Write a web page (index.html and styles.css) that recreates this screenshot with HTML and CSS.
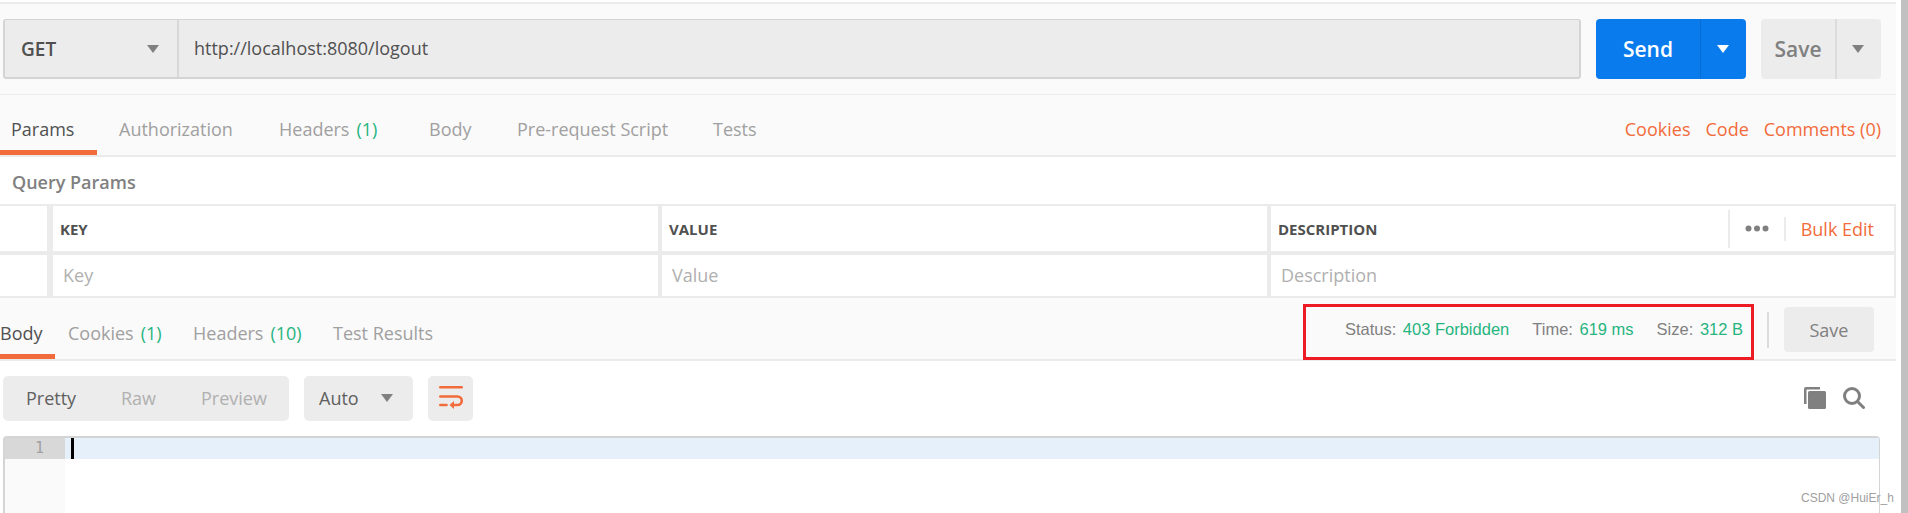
FILE: index.html
```html
<!DOCTYPE html>
<html lang="en">
<head>
<meta charset="utf-8">
<title>Postman request</title>
<link rel="stylesheet" href="styles.css">
</head>
<body>
<div class="page">
  <main class="app">
    <section class="request-bar">
      <div class="url-group">
        <div class="method"><span>GET</span><i class="caret caret-grey"></i></div>
        <div class="url">http://localhost:8080/logout</div>
      </div>
      <div class="split send"><span class="split-main">Send</span><span class="split-side"><i class="caret caret-white"></i></span></div>
      <div class="split save"><span class="split-main">Save</span><span class="split-side"><i class="caret caret-grey"></i></span></div>
    </section>
    <nav class="tabs req-tabs">
      <a class="tab active tab-params">Params</a>
      <a class="tab tab-auth">Authorization</a>
      <a class="tab tab-headers">Headers <b class="count">(1)</b></a>
      <a class="tab tab-body">Body</a>
      <a class="tab tab-pre">Pre-request Script</a>
      <a class="tab">Tests</a>
      <div class="links"><a>Cookies</a><a>Code</a><a>Comments (0)</a></div>
    </nav>
    <section class="params">
      <h2 class="params-title">Query Params</h2>
      <div class="table">
        <div class="cell chk"></div>
        <div class="cell head">KEY</div>
        <div class="cell head">VALUE</div>
        <div class="cell head desc-head">
          <span>DESCRIPTION</span>
          <span class="head-tools">
            <span class="dots"><svg width="24" height="7" viewBox="0 0 24 7" fill="#808080"><circle cx="3.500" cy="3.500" r="3"/><circle cx="12" cy="3.500" r="3"/><circle cx="20.500" cy="3.500" r="3"/></svg></span>
            <a class="bulk">Bulk Edit</a>
          </span>
        </div>
        <div class="cell chk"></div>
        <div class="cell ph">Key</div>
        <div class="cell ph">Value</div>
        <div class="cell ph">Description</div>
      </div>
    </section>
    <nav class="tabs res-tabs">
      <a class="tab active tab-rbody">Body</a>
      <a class="tab tab-rcookies">Cookies <b class="count">(1)</b></a>
      <a class="tab tab-rheaders">Headers <b class="count">(10)</b></a>
      <a class="tab">Test Results</a>
      <div class="status">
        <span class="meta">Status: <b>403 Forbidden</b></span>
        <span class="meta">Time: <b>619 ms</b></span>
        <span class="meta">Size: <b>312 B</b></span>
        <span class="rule"></span>
        <span class="res-save">Save</span>
      </div>
      <div class="annot"></div>
    </nav>
    <section class="toolbar">
      <div class="modes"><span class="mode on">Pretty</span><span class="mode">Raw</span><span class="mode">Preview</span></div>
      <div class="auto"><span>Auto</span><i class="caret caret-grey"></i></div>
      <div class="wrap-btn">
        <svg width="24" height="23" viewBox="0 0 24 23" fill="none" stroke="#f26b3a" stroke-width="2.600" stroke-linecap="round"><path d="M1.300 1.300H22.700"/><path d="M1.300 10.500H18.500a4.250 4.250 0 0 1 0 8.500H14"/><path d="M1.300 19H7.500"/><path d="M15 15v8l-4.500-4z" fill="#f26b3a" stroke="none"/></svg>
      </div>
      <div class="tools">
        <svg width="22" height="22" viewBox="0 0 22 22" fill="#808080"><path d="M0 2a2 2 0 0 1 2-2h14v2.500H2.500V17H0z"/><rect x="4" y="4" width="18" height="18" rx="1.500"/></svg>
        <svg width="22" height="22" viewBox="0 0 22 22" fill="none" stroke="#808080" stroke-width="3"><circle cx="9" cy="9" r="7.500"/><path d="M14.500 14.500l6 6" stroke-linecap="round"/></svg>
      </div>
    </section>
    <section class="editor">
      <div class="gutter"><div class="line-no">1</div></div>
      <div class="code"><div class="active-line"><i class="cursor"></i></div></div>
    </section>
  </main>
  <div class="scrollbar"></div>
</div>
<div class="watermark">CSDN @HuiEr_h</div>
</body>
</html>
```
FILE: styles.css
```css
* { box-sizing: border-box; }
html, body { margin: 0; height: 513px; overflow: hidden; background: #fff; }
body { font-family: "Open Sans", "Noto Sans", sans-serif; color: #505050; position: relative; }
.page { display: flex; height: 513px; }
.app { width: 1896px; padding-top: 2px; flex: none; }
.scrollbar { width: 7px; margin-left: 5px; background: #c1c1c1; }

.request-bar { height: 93px; display: flex; align-items: flex-start; padding: 15px 0 0 3px; background: #fafafa; border-top: 2px solid #ebebeb; border-bottom: 1px solid #ebebeb; }
.url-group { width: 1578px; height: 60px; display: flex; background: #ececec; border: 2px solid #d4d4d4; border-top-width: 1px; border-radius: 3px; }
.method { width: 174px; display: flex; align-items: center; justify-content: space-between; padding: 1px 18px 0 16px; border-right: 2px solid #d8d8d8; font-size: 19px; font-weight: 600; color: #505050; }
.url { padding: 0 0 1px 15px; display: flex; align-items: center; font-size: 18px; color: #505050; }
.caret { display: block; width: 0; height: 0; border-left: 6px solid transparent; border-right: 6px solid transparent; border-top: 8px solid #808080; }
.caret-white { border-top-color: #fff; }
.split { height: 60px; display: flex; border-radius: 4px; font-size: 21px; font-weight: 600; }
.send { width: 150px; margin-left: 15px; background: #097bed; color: #fff; }
.save { width: 120px; margin-left: 15px; background: #ececec; color: #808080; }
.split-main { flex: 1; display: flex; align-items: center; justify-content: center; }
.split-side { display: flex; align-items: center; justify-content: center; }
.send .split-side { width: 46px; border-left: 1px solid #0a6bd0; padding-right: 2px; }
.save .split-side { width: 46px; border-left: 2px solid #dcdcdc; padding-right: 2px; }

.tabs { display: flex; position: relative; background: #fafafa; font-size: 18px; color: #a0a0a0; }
.tab { display: flex; align-items: center; white-space: nowrap; border-bottom: 5px solid transparent; }
.tab.active { color: #505050; border-bottom-color: #f26b3a; }
.count { font-weight: 400; color: #26b47f; margin-left: 7px; }
.req-tabs { height: 62px; border-bottom: 2px solid #ebebeb; }
.req-tabs .tab { height: 60px; padding-top: 12px; }
.tab-params { width: 97px; padding-left: 11px; margin-right: 22px; }
.tab-auth { width: 160px; }
.tab-headers { width: 150px; }
.tab-body { width: 88px; }
.tab-pre { width: 196px; }
.links { margin-left: auto; height: 60px; padding: 8px 15px 0 0; display: flex; align-items: center; gap: 15px; color: #f26b3a; }

.params { background: #fff; }
.params-title { margin: 0; height: 47px; padding: 2px 0 0 12px; display: flex; align-items: center; font-size: 18px; font-weight: 600; color: #808080; }
.table { display: grid; grid-template-columns: 49px 605px 605px 1fr; grid-template-rows: 45px 41px; gap: 4px; background: #ebebeb; padding: 2px 2px 2px 0; }
.cell { background: #fff; display: flex; align-items: center; padding-left: 7px; font-size: 18px; }
.chk { border-right: 2px solid #ebebeb; }
.head { font-size: 15px; font-weight: 700; color: #505050; }
.ph { padding-left: 10px; padding-bottom: 1px; color: #b0b0b0; }
.desc-head { justify-content: space-between; padding-right: 20px; }
.head-tools { display: flex; align-items: center; align-self: stretch; }
.dots { height: 38px; width: 56px; display: flex; align-items: center; justify-content: center; border-left: 2px solid #ebebeb; }
.bulk { height: 24px; display: flex; align-items: center; padding-left: 15px; border-left: 2px solid #ebebeb; color: #f26b3a; font-size: 18px; font-weight: 400; }

.res-tabs { height: 63px; border-bottom: 2px solid #ebebeb; }
.res-tabs .tab { height: 61px; padding-top: 13px; }
.tab-rbody { width: 55px; margin-right: 13px; }
.tab-rcookies { width: 125px; }
.tab-rheaders { width: 140px; }
.status { margin-left: auto; height: 61px; display: flex; align-items: center; padding: 2px 22px 0 0; }
.meta { font-family: "Liberation Sans", Arial, sans-serif; font-size: 16.500px; color: #808080; margin-right: 23px; white-space: nowrap; }
.meta b { font-weight: 400; color: #26b47f; margin-left: 2px; }
.rule { width: 2px; height: 36px; background: #dcdcdc; margin: 0 15px 0 1px; }
.res-save { width: 90px; height: 45px; background: #ececec; border-radius: 4px; display: flex; align-items: center; justify-content: center; color: #808080; font-size: 18px; }
.annot { position: absolute; left: 1303px; top: 6px; width: 451px; height: 56px; border: 3px solid #ed1c24; }

.toolbar { height: 75px; padding: 15px 0 0 3px; display: flex; align-items: flex-start; }
.modes { width: 286px; height: 45px; display: flex; align-items: center; background: #ececec; border-radius: 5px; font-size: 18px; color: #b0b0b0; padding-bottom: 1px; }
.mode { white-space: nowrap; }
.mode:nth-child(1) { margin-left: 23px; width: 95px; }
.mode:nth-child(2) { width: 80px; }
.mode.on { color: #606060; }
.auto { width: 109px; height: 45px; margin-left: 15px; display: flex; align-items: center; justify-content: space-between; padding: 0 20px 1px 15px; background: #ececec; border-radius: 5px; font-size: 18px; color: #606060; }
.wrap-btn { width: 45px; height: 45px; margin-left: 15px; padding-bottom: 2px; display: flex; align-items: center; justify-content: center; background: #ececec; border-radius: 5px; }
.tools { margin-left: auto; margin-top: 11px; margin-right: 31px; display: flex; align-items: center; gap: 17px; }

.editor { height: 77px; margin-left: 3px; width: 1877px; display: flex; border-top: 2px solid #d4d4d4; border-left: 2px solid #d4d4d4; border-right: 1px solid #d4d4d4; border-radius: 4px 4px 0 0; }
.gutter { width: 60px; background: #fafafa; }
.line-no { height: 21px; background: #d8d8d8; color: #a0a0a0; font-family: "DejaVu Sans Mono", monospace; font-size: 15px; line-height: 21px; text-align: right; padding-right: 21px; }
.code { flex: 1; }
.active-line { height: 21px; background: #e6f0fb; padding-left: 6px; }
.cursor { display: block; width: 3px; height: 21px; background: #000; }

.watermark { position: absolute; left: 1801px; top: 491px; font-family: "Liberation Sans", Arial, sans-serif; font-size: 12px; line-height: 14px; color: #a0a0a0; }
```
